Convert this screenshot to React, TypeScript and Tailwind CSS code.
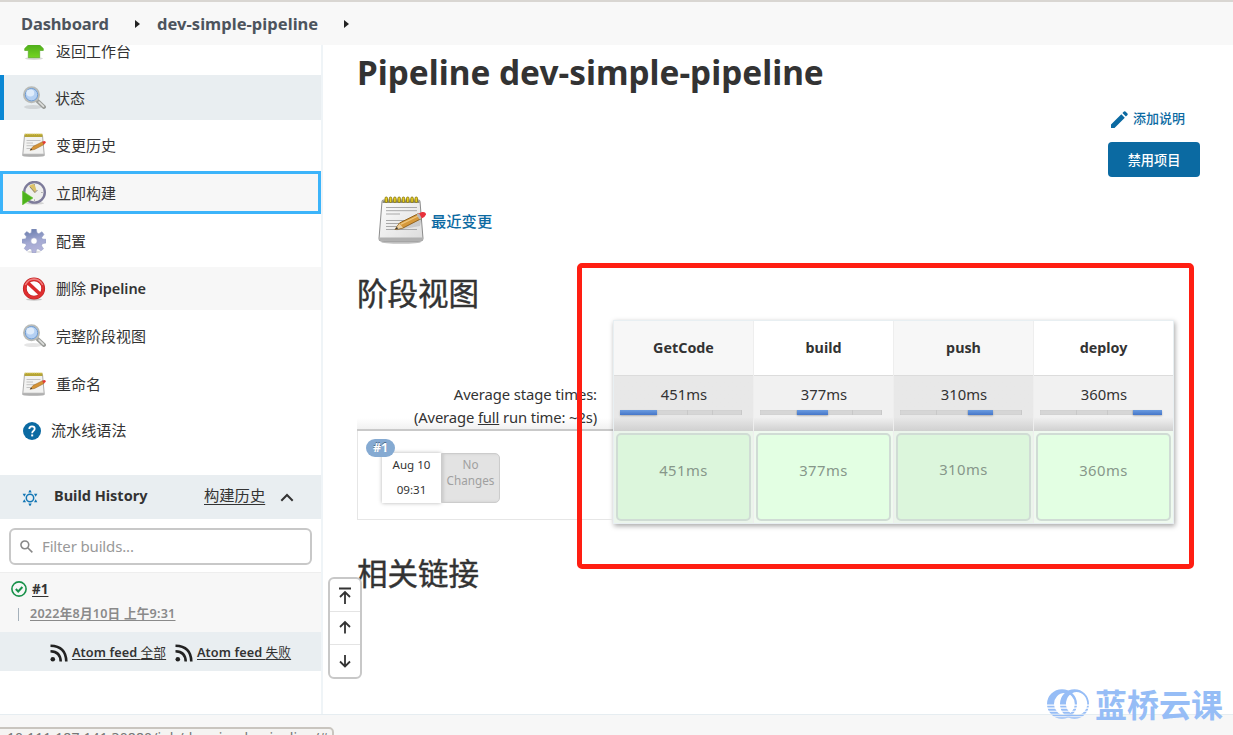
import React from "react";

type P = { className?: string };

const UpArrow = ({ className }: P) => (
  <svg viewBox="0 0 24 24" className={className}>
    <defs>
      <linearGradient id="up" x1="0" y1="0" x2="0" y2="1">
        <stop offset="0.3" stopColor="#4fae1b" />
        <stop offset="1" stopColor="#74d522" />
      </linearGradient>
    </defs>
    <ellipse cx="12" cy="19.500" rx="9" ry="1.400" fill="#000" opacity=".15" />
    <path d="M12 .5 L21.300 9.500 V11.500 H17.700 V18.700 H6.300 V11.500 H2.700 V9.500 Z" fill="url(#up)" stroke="#59a92a" strokeWidth=".7" />
  </svg>
);

const Magnifier = ({ className }: P) => (
  <svg viewBox="0 0 24 24" className={className}>
    <ellipse cx="11" cy="21" rx="9" ry="2" fill="#000" opacity=".1" />
    <path d="M15.300 14.800 L22 21" stroke="#9b9d9a" strokeWidth="4" strokeLinecap="round" />
    <path d="M17 16 L21.500 20.300" stroke="#dfe0de" strokeWidth="1.600" strokeLinecap="round" />
    <circle cx="9.500" cy="8.700" r="7.500" fill="#b9d3f3" stroke="#b9bbb8" strokeWidth="2" />
    <circle cx="9.500" cy="8.700" r="6.200" fill="#b4d0f3" stroke="#6f9bd0" strokeWidth="1" />
    <ellipse cx="8.300" cy="7" rx="4" ry="3.400" fill="#dfecfb" />
  </svg>
);

const SmallNotepad = ({ className }: P) => (
  <svg viewBox="0 0 24 24" className={className}>
    <ellipse cx="11.500" cy="23" rx="10.500" ry="1" fill="#000" opacity=".25" />
    <path d="M2.500 2.500 H20.500 L22.300 22.500 H.7 Z" fill="#f2f2f1" stroke="#a3a3a3" strokeWidth=".9" />
    <path d="M1 20.800 H22 V22.500 H.8 Z" fill="#b5b5b5" />
    <path d="M2.500 .8 H20.500 V4 H2.500 Z" fill="#b5a436" />
    <path d="M3 1.300 H20.500" stroke="#dccb55" strokeWidth="1" strokeDasharray="1.200 1" />
    <path d="M4.500 7.500 H18.500 M4.500 10 H11 M4.500 12.700 H17 M4.500 15.500 H9" stroke="#bdbdbd" strokeWidth=".9" />
    <path d="M8 17.300 L11 13.500 L20.500 8.700 L22 11.500 L12.500 16.500 Z" fill="#d59336" stroke="#94631d" strokeWidth=".5" />
    <path d="M8 17.300 L9.300 15.600 L10.200 16.700 Z" fill="#333" />
    <path d="M20.200 8.800 L22.300 8 Q24 8.300 23.800 9.700 L21.800 11.600 Z" fill="#e23a35" />
  </svg>
);

const Notepad = ({ className }: P) => (
  <svg viewBox="0 0 48 48" className={className}>
    <defs>
      <linearGradient id="paper" x1="0" y1="0" x2="1" y2="1">
        <stop offset="0" stopColor="#fdfdfd" />
        <stop offset="1" stopColor="#dcdcdc" />
      </linearGradient>
    </defs>
    <ellipse cx="23" cy="46" rx="20" ry="1.800" fill="#000" opacity=".25" />
    <path d="M5.500 4 H40.500 Q42 4 42 5.500 L45 42.500 Q45 45 43 45 H3 Q.8 45 1 42.500 L4 5.500 Q4 4 5.500 4 Z" fill="url(#paper)" stroke="#8c8c8c" />
    <path d="M1.500 41.500 H44.500 L45 43 Q45 44.700 43 44.700 H3 Q1 44.700 1 43 Z" fill="#b0b0b0" />
    <path d="M4.500 4.500 h37 v2.500 h-37z" fill="#8c8c80" />
    <path d="M8 11.500 h31 M8 14.700 h31 M8 18 h14 M8 24.500 h31 M8 27.500 h26 M8 30.500 h18 M8 33.500 h31" stroke="#a8a8a8" strokeWidth="1" />
    <g fill="#e6ce22" stroke="#85730d" strokeWidth=".8">
      {[7, 11.300, 15.600, 19.900, 24.200, 28.500, 32.800, 37].map((x) => (
        <rect key={x} x={x} y="1" width="2.500" height="5.500" rx="1.200" />
      ))}
    </g>
    <path d="M18 34.500 L42 30 L44 22 L30 24 Z" fill="#000" opacity=".12" />
    <path d="M17 33.500 L21.500 27 L40.500 17.500 L43.500 22.500 L25 32 Z" fill="#d6993b" stroke="#8a5a15" strokeWidth=".9" />
    <path d="M23 28.200 L41 19.500" stroke="#efc67c" strokeWidth="1.300" />
    <path d="M17 33.500 L21.500 27.500 L25 31.700 Z" fill="#ecd0a0" />
    <path d="M17 33.500 L18.800 31 L20.200 32.600 Z" fill="#333" />
    <path d="M40.500 17.500 L44 16 Q48 15.500 48 18.500 Q47.500 20.500 43.500 22.500 Z" fill="#e8313b" />
    <path d="M38.500 18.500 L41 17.200 L43.700 22.200 L41.500 23.500 Z" fill="#b9b9b9" />
  </svg>
);

const ClockRun = ({ className }: P) => (
  <svg viewBox="0 0 24 24" className={className}>
    <ellipse cx="13" cy="22.300" rx="9" ry="1.500" fill="#000" opacity=".15" />
    <circle cx="12.500" cy="11.300" r="10.300" fill="#efefed" stroke="#7d7b9a" strokeWidth="2.400" />
    <path d="M7 5 Q9.500 2.800 12.500 3 L14.500 9.500 L12.500 12 Z" fill="#dcc168" />
    <path d="M8 6 L13 11.500 L15.500 9" fill="none" stroke="#8b8980" strokeWidth="1" />
    <path d="M12.500 3.200v1 M12.500 18.500v1.300 M19.300 11.500h1.300" stroke="#999" strokeWidth="1" />
    <path d="M.4 10 L11 17 L.4 24 Z" fill="#4db31b" stroke="#6fc53f" strokeWidth=".6" />
  </svg>
);

const Gear = ({ className }: P) => (
  <svg viewBox="0 0 24 24" className={className}>
    <defs>
      <linearGradient id="gear" gradientUnits="userSpaceOnUse" x1="6" y1="0" x2="12" y2="24">
        <stop offset="0.100" stopColor="#7384b3" />
        <stop offset="0.550" stopColor="#a3a9d2" />
        <stop offset="1" stopColor="#b5b4da" />
      </linearGradient>
    </defs>
    <ellipse cx="12" cy="22.800" rx="7" ry="1.200" fill="#000" opacity=".12" />
    <path
      d="M9.700 0 H14.300 L15 3.800 L16.800 4.700 L20 2.700 L22 5.500 L19.700 8.500 L20.300 10 L24 10.300 V14 L20.300 14.700 L19.500 16.700 L21.500 19.800 L19 21.800 L16 19.800 L14.500 20.300 L13.700 24 H10.300 L9.500 20.300 L7.700 19.700 L4.800 21.800 L2.200 19.500 L4.300 16.300 L3.600 14.700 L0 14 V10.300 L3.700 9.700 L4.400 7.800 L2.400 5 L4.700 2.500 L7.700 4.500 L9.200 3.800 Z"
      fill="url(#gear)"
      stroke="#8f98c0"
      strokeWidth=".5"
    />
    <circle cx="12" cy="12" r="3.300" fill="#fff" stroke="#9299c4" strokeWidth=".7" />
  </svg>
);

const Forbidden = ({ className }: P) => (
  <svg viewBox="0 0 24 24" className={className}>
    <ellipse cx="12" cy="22.500" rx="8" ry="1.200" fill="#000" opacity=".2" />
    <circle cx="12" cy="11.500" r="9.200" fill="#fff" stroke="#bb2324" strokeWidth="3.800" />
    <path d="M5.500 5.500 L18.500 17.500" stroke="#d92a2b" strokeWidth="3.600" />
    <circle cx="12" cy="11.500" r="9.200" fill="none" stroke="#e02f30" strokeWidth="2.700" />
    <path d="M3.300 8 Q6 2.300 12 2 Q18 2.300 20.700 8" fill="none" stroke="#ee7f7f" strokeWidth="1.400" />
  </svg>
);

const Help = ({ className }: P) => (
  <svg viewBox="0 0 20 20" className={className}>
    <circle cx="10" cy="10" r="10" fill="#0b6aa2" />
    <path d="M7 7.800 Q7 4.900 10 4.900 Q13 4.900 13 7.600 Q13 9 11.500 10 Q10.200 10.900 10.200 12.400" fill="none" stroke="#fff" strokeWidth="2" />
    <rect x="9.100" y="13.800" width="2.200" height="2.200" fill="#fff" />
  </svg>
);

const Feed = ({ className }: P) => (
  <svg viewBox="0 0 18 18" className={className} fill="none" stroke="#222" strokeWidth="2.600">
    <circle cx="2.800" cy="15.200" r="2.300" fill="#222" stroke="none" />
    <path d="M.5 7.200 Q10.500 7.500 10.700 17.500 M.5 1.700 Q16 2 16.300 17.500" />
  </svg>
);

const Caret = () => (
  <svg viewBox="0 0 5 8" className="h-2 w-[5px]">
    <path d="M0 0 L5 4 L0 8Z" fill="#222" />
  </svg>
);

const items = [
  { icon: UpArrow, label: "返回工作台", cls: "h-11 mb-[2px]" },
  { icon: Magnifier, label: "状态", cls: "h-[45px] mb-[3px] pt-px bg-[#e9eef1] border-l-4 border-[#0b87d4] pl-[18px]! gap-[9px]!" },
  { icon: SmallNotepad, label: "变更历史", cls: "h-11 mb-1" },
  { icon: ClockRun, label: "立即构建", cls: "h-[43px] mb-[5px] pt-px bg-[#f7f7f7] border-[3px] border-[#3cb4fa] pl-[19px]!" },
  { icon: Gear, label: "配置", cls: "h-11 mb-1" },
  { icon: Forbidden, label: "删除 Pipeline", cls: "h-[43px] mb-[5px] bg-[#f7f7f7]" },
  { icon: Magnifier, label: "完整阶段视图", cls: "h-[42px] mb-[5px]" },
  { icon: SmallNotepad, label: "重命名", cls: "h-11 mb-[2px]" },
];

const stages = [
  { name: "GetCode", time: "451ms" },
  { name: "build", time: "377ms" },
  { name: "push", time: "310ms" },
  { name: "deploy", time: "360ms" },
];

const segments = [37, 31, 25, 29];

function Sidebar() {
  return (
    <aside className="w-[323px] shrink-0 overflow-hidden border-r-2 border-[#eff4f7]">
      <nav className="-mt-4 flex h-[446px] flex-col">
        {items.map(({ icon: Icon, label, cls }) => (
          <a key={label} className={`flex shrink-0 items-center gap-[10px] pl-[22px] text-[15px] ${cls}`}>
            <Icon className="h-6 w-6" />
            {label.includes("Pipeline") ? (
              <span>删除 <span className="text-[14.500px] font-semibold tracking-[-0.050px]">Pipeline</span></span>
            ) : (
              <span>{label}</span>
            )}
          </a>
        ))}
        <a className="flex h-11 shrink-0 items-center gap-[10px] pt-px pl-[23px] text-[15.100px]">
          <Help className="h-[18px] w-[18px]" />
          <span>流水线语法</span>
        </a>
      </nav>
      <div className="flex h-11 items-center bg-[#e9eef1] pl-[22px]">
        <svg viewBox="0 0 16 16" className="mt-[2px] h-4 w-4" fill="#1276b5">
          <circle cx="8" cy="8" r="3.700" fill="none" stroke="#1276b5" strokeWidth="1.500" />
          {[0, 60, 120, 180, 240, 300].map((a) => (
            <path key={a} transform={`rotate(${a} 8 8)`} d="M8 -.5 L9.700 2.400 H6.300 Z" />
          ))}
        </svg>
        <span className="ml-4 w-[150px] pb-[2px] text-[14.500px] font-bold whitespace-nowrap">Build History</span>
        <span className="pb-[3px] text-[15.300px] underline decoration-1 underline-offset-[3px]">构建历史</span>
        <svg viewBox="0 0 14 9" className="ml-[15px] h-[9px] w-[14px]" fill="none" stroke="#333" strokeWidth="2">
          <path d="M1.300 7.700 L7 2 L12.700 7.700" />
        </svg>
      </div>
      <div className="flex h-[54px] border-b border-[#eee] px-[9px] pt-[9px]">
        <div className="flex h-[37px] w-[304px] items-center rounded-[6px] border-2 border-[#c8c8c8] bg-white pl-[9px]">
          <svg viewBox="0 0 14 14" className="h-[13px] w-[13px]" fill="none" stroke="#888" strokeWidth="1.700">
            <circle cx="5.200" cy="5.200" r="4.200" />
            <path d="M8.300 8.300 L13.300 13.300" />
          </svg>
          <span className="ml-[9px] text-[15px] tracking-[-0.150px] text-[#999]">Filter builds...</span>
        </div>
      </div>
      <div className="flex h-[59px] flex-col bg-[#f7f7f7] pt-[5px] pl-[11px]">
        <div className="flex h-[22px] items-center gap-[5px]">
          <svg viewBox="0 0 16 16" className="h-4 w-4" fill="none" stroke="#18914a" strokeWidth="1.600">
            <circle cx="8" cy="8" r="7.100" />
            <path d="M4.800 8 L7.200 10.500 L11.400 6" strokeWidth="2" />
          </svg>
          <span className="text-[13.500px] font-bold underline underline-offset-2">#1</span>
        </div>
        <div className="flex h-[29px] items-center gap-[11px] pl-[7px] text-[#8a8a8a]">
          <span className="h-[13px] w-px bg-[#a5b1bb]" />
          <span className="text-[12.600px] font-semibold tracking-[0.220px] whitespace-nowrap underline underline-offset-2">2022年8月10日 上午9:31</span>
        </div>
      </div>
      <div className="flex h-[39px] items-center bg-[#e9eef1] pt-[2px] pl-[50px] text-[12.700px] font-semibold whitespace-nowrap">
        <Feed className="h-[18px] w-[18px]" />
        <span className="ml-1 w-[103px] tracking-[0.080px] underline underline-offset-2">Atom feed <span className="font-normal">全部</span></span>
        <Feed className="h-[18px] w-[18px]" />
        <span className="ml-1 tracking-[0.080px] underline underline-offset-2">Atom feed <span className="font-normal">失败</span></span>
      </div>
    </aside>
  );
}

function StageView() {
  return (
    <div className="flex">
      <div className="flex w-[256px] flex-col pt-[54px]">
        <div className="flex h-[57px] flex-col border-b-2 border-[#c9c9c9] bg-linear-to-t from-[#f1f1f1] to-white to-20% pt-[9px] pr-[16px] text-right text-[14.800px] leading-[23px]">
          <span className="tracking-[-0.100px]">Average stage times:</span>
          <span className="tracking-[-0.130px]">(Average <u>full</u> run time: ~2s)</span>
        </div>
        <div className="relative flex h-[89px] border-b border-l border-[#e6e6e6] pt-[22px] pl-[24px]">
          <span className="absolute top-[8px] left-[8px] z-10 flex h-[18px] w-[29px] items-center justify-center rounded-full bg-[#85aad2] text-[12.500px] font-bold text-white [text-shadow:0_-1px_0_#4f6b88]">#1</span>
          <div className="flex h-[50px] w-[59px] flex-col items-center bg-white text-[11.600px] leading-[24.500px] shadow-[0_0_4px_rgba(0,0,0,.3)]">
            <span className="whitespace-nowrap">Aug 10</span>
            <span>09:31</span>
          </div>
          <div className="h-[50px] w-[59px] rounded-r-[5px] border border-[#ccc] bg-[#e3e3e3] pt-[2px] text-center text-[11.700px] leading-4 text-[#a0a0a0] shadow-[inset_2px_0_3px_rgba(0,0,0,.1)]">
            No<br />Changes
          </div>
        </div>
      </div>
      <div className="flex h-[204px] w-[561px] border border-[#e8eff2] shadow-[1px_2px_5px_rgba(0,0,0,.35)]">
        {stages.map((s, i) => (
          <div key={s.name} className="flex w-[140px] shrink-0 flex-col border-r border-[#eee] text-center last:w-[139px] last:border-r-0">
            <div className={`flex h-[54px] items-center justify-center text-[14.300px] font-bold ${i % 2 ? "bg-white" : "bg-[#f7f7f7]"}`}>{s.name}</div>
            <div className={`flex h-[56px] flex-col border-t border-[#dcdcdc] bg-linear-to-b from-75% to-[#d0d0d0] pt-[8px] pl-[6px] ${i % 2 ? "from-[#f1f1f1]" : "from-[#e8e8e8]"}`}>
              <span className="pr-[5px] text-[14.800px] leading-5">{s.time}</span>
              <div className="mt-[6px] flex h-[5px] w-[122px] bg-[#d6d6d6] shadow-[inset_0_0_1px_#aaa]">
                {segments.map((w, j) => (
                  <span
                    key={j}
                    style={{ width: w }}
                    className={j === i ? "bg-linear-to-b from-[#6c9ce0] to-[#4576c9] shadow-[0_1px_2px_rgba(0,0,0,.25)]" : "border-r border-[#c8c8c8]"}
                  />
                ))}
              </div>
            </div>
            <div className={`flex h-[92px] p-[2px] ${i % 2 ? "bg-[#effaef]" : "bg-[#ebf5eb]"}`}>
              <div className={`flex flex-1 justify-center rounded-[5px] border-2 border-[#d0dcd5] text-[14.800px] leading-[22px] tracking-[0.450px] text-[#87978a] ${i === 2 ? "pt-[23px]" : "pt-[24px]"} ${i % 2 ? "bg-[#e3ffe3]" : "bg-[#dcf6dc]"}`}>
                <span>{s.time}</span>
              </div>
            </div>
          </div>
        ))}
      </div>
    </div>
  );
}

export default function App() {
  return (
    <div className="relative flex h-[735px] w-[1233px] flex-col overflow-hidden bg-white font-['Noto_Sans','Noto_Sans_CJK_SC',sans-serif] text-[#333]">
      <header className="flex h-[45px] shrink-0 items-center border-t-2 border-[#d9d6d2] bg-[#f8f8f8] pl-[21px] text-[16.500px] font-bold text-[#4d545d]">
        <span className="w-[114px] pt-px tracking-[-0.150px]">Dashboard</span>
        <Caret />
        <span className="ml-[17px] w-[187px] pt-px tracking-[0.040px] whitespace-nowrap">dev-simple-pipeline</span>
        <Caret />
      </header>
      <div className="flex h-[669px] shrink-0">
        <Sidebar />
        <main className="flex flex-1 flex-col pr-[33px] pl-[34px]">
          <h1 className="h-[60px] pt-[5px] text-[33.400px] leading-[44px] font-bold whitespace-nowrap">Pipeline dev-simple-pipeline</h1>
          <div className="flex h-[72px] flex-col items-end text-[13px] text-[#0b6aa2]">
            <a className="mt-[4px] flex h-5 items-center gap-[5px] pr-[15px] font-medium">
              <svg viewBox="0 0 17 17" className="h-[17px] w-[17px]" fill="#0b6aa2">
                <path d="M0 17 V13.500 L10.300 3.200 L13.800 6.700 L3.500 17 Z M11.400 2.100 L13 .5 Q13.700 0 14.400 .5 L16.500 2.600 Q17 3.300 16.500 4 L14.900 5.600 Z" />
              </svg>
              添加说明
            </a>
            <button className="mt-[13px] h-[35px] w-[92px] rounded-[4px] bg-[#0b6aa2] pt-[2px] text-[13.200px] font-medium text-white">禁用项目</button>
          </div>
          <div className="mt-[18px] flex h-[50px] items-center pl-[21px]">
            <Notepad className="h-12 w-12" />
            <a className="ml-[5px] pt-[3px] text-[15.300px] font-medium text-[#0b6aa2]">最近变更</a>
          </div>
          <h2 className="mt-[26px] h-[49px] text-[30.500px] leading-[44px] font-normal [-webkit-text-stroke:0.4px_#333]">阶段视图</h2>
          <StageView />
          <h2 className="mt-[27px] text-[30.500px] leading-[44px] font-normal [-webkit-text-stroke:0.4px_#333]">相关链接</h2>
        </main>
      </div>
      <footer className="flex-1 border-t border-[#e6edf1] bg-[#f7f7f7]" />

      <div className="absolute top-[263px] left-[577px] h-[306px] w-[617px] rounded-[5px] border-[5px] border-[#ff1e12]" />

      <div className="absolute top-[577px] left-[328px] flex h-[102px] w-[34px] flex-col divide-y divide-[#e4e4e4] rounded-[6px] border-2 border-[#c8c8c8] bg-white">
        {["M2 2.500 H14 M8 18 V6 M3 11 L8 6 L13 11", "M8 14.500 V3 M3 8 L8 3 L13 8", "M8 3 V14.500 M3 9.500 L8 14.500 L13 9.500"].map((d) => (
          <div key={d} className="flex flex-1 items-center justify-center">
            <svg viewBox="0 0 16 18" className="h-[18px] w-4" fill="none" stroke="#333" strokeWidth="1.800">
              <path d={d} />
            </svg>
          </div>
        ))}
      </div>

      <div className="absolute top-[687px] left-[1047px] flex h-9 items-center gap-[6px] text-[32px] leading-9 font-bold whitespace-nowrap text-[#96bdf6]">
        <svg viewBox="0 0 42 30" className="mb-[2px] h-[30px] w-[42px]" fill="#96bdf6">
          <defs>
            <clipPath id="bands">
              <path d="M0 0 H42 V15.500 H0 Z M0 16.700 H42 V18.500 H0 Z M0 19.700 H42 V21.700 H0 Z M0 22.700 H42 V24.700 H0 Z M0 25.700 H42 V27.200 H0 Z M0 28.200 H42 V30 H0 Z" />
            </clipPath>
          </defs>
          <g clipPath="url(#bands)" fillRule="evenodd">
            <path d="M0 15 A15 14.800 0 0 1 30 15 A15 14.800 0 0 1 0 15 Z M7 15 A10.400 11 0 0 0 27.800 15 A10.400 11 0 0 0 7 15 Z" />
            <path d="M13 15 A14.500 14.800 0 0 1 42 15 A14.500 14.800 0 0 1 13 15 Z M19 15 A10.600 11 0 0 0 40.200 15 A10.600 12 0 0 0 19 15 Z" />
          </g>
        </svg>
        蓝桥云课
      </div>

      <div className="absolute top-[727px] left-[-2px] h-5 w-[336px] overflow-hidden rounded-tr-[5px] border-2 border-[#c9c5bf] bg-[#f5f4f2] pl-[7px] text-[14px] leading-[18px] tracking-[0.100px] whitespace-nowrap text-[#777]">
        10.111.187.141:30880/job/dev-simple-pipeline/#
      </div>
    </div>
  );
}
